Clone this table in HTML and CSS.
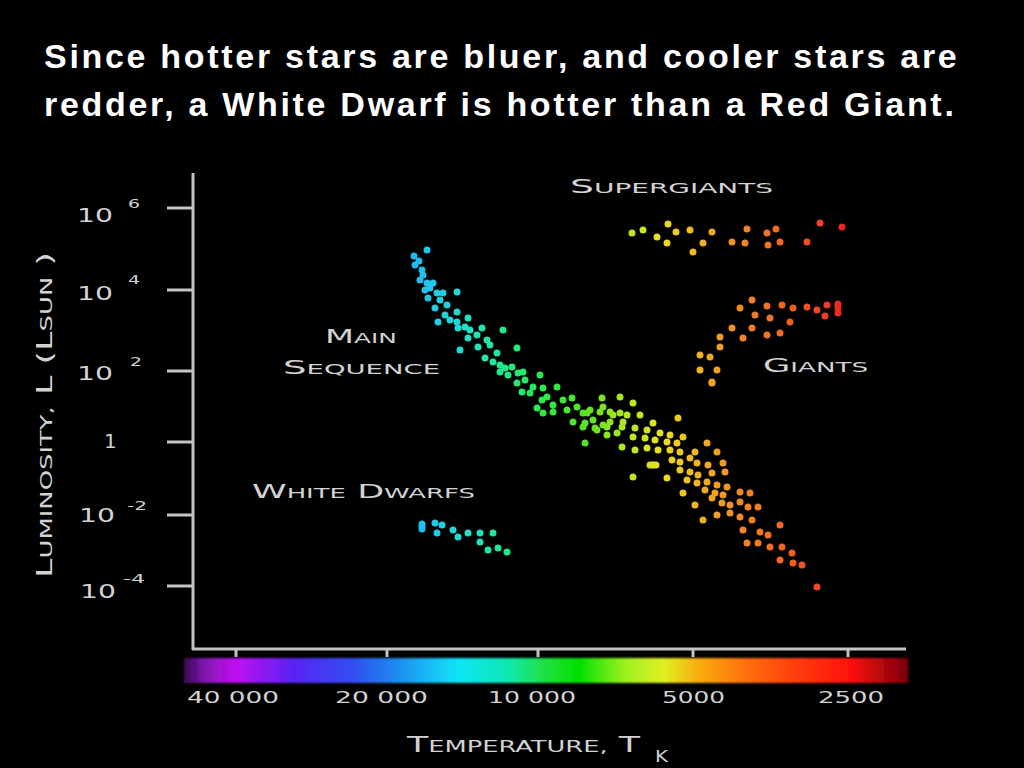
FILE: index.html
```html
<!DOCTYPE html>
<html lang="en">
<head>
<meta charset="utf-8">
<title>Hertzsprung-Russell diagram</title>
<link rel="stylesheet" href="styles.css">
</head>
<body>
<main class="slide">
  <h1 class="title">Since hotter stars are bluer, and cooler stars are<br>redder, a White Dwarf is hotter than a Red Giant.</h1>
  <svg class="chart" width="1024" height="639" viewBox="0 129 1024 639" xmlns="http://www.w3.org/2000/svg">
    <defs>
      <linearGradient id="temp" gradientUnits="userSpaceOnUse" x1="184" y1="0" x2="908" y2="0">
        <stop offset="0" stop-color="#3a0a52"/>
        <stop offset="0.025" stop-color="#7a14a8"/>
        <stop offset="0.07" stop-color="#c010f0"/>
        <stop offset="0.15" stop-color="#5a22f4"/>
        <stop offset="0.236" stop-color="#3050f0"/>
        <stop offset="0.283" stop-color="#2080f0"/>
        <stop offset="0.38" stop-color="#10e6f8"/>
        <stop offset="0.447" stop-color="#10e8b0"/>
        <stop offset="0.5" stop-color="#20e040"/>
        <stop offset="0.545" stop-color="#00e000"/>
        <stop offset="0.61" stop-color="#a0f020"/>
        <stop offset="0.663" stop-color="#e0f020"/>
        <stop offset="0.708" stop-color="#f8b010"/>
        <stop offset="0.775" stop-color="#ff7010"/>
        <stop offset="0.841" stop-color="#ff4010"/>
        <stop offset="0.92" stop-color="#ff1010"/>
        <stop offset="1" stop-color="#780010"/>
      </linearGradient>
      <linearGradient id="starcol" gradientUnits="userSpaceOnUse" x1="400" y1="0" x2="850" y2="0">
        <stop offset="0" stop-color="#20a8f0"/>
        <stop offset="0.067" stop-color="#20c8e8"/>
        <stop offset="0.156" stop-color="#20e0c8"/>
        <stop offset="0.244" stop-color="#20e880"/>
        <stop offset="0.333" stop-color="#30e840"/>
        <stop offset="0.422" stop-color="#60e020"/>
        <stop offset="0.5" stop-color="#b0e820"/>
        <stop offset="0.578" stop-color="#e8e020"/>
        <stop offset="0.667" stop-color="#f0b020"/>
        <stop offset="0.756" stop-color="#f08828"/>
        <stop offset="0.867" stop-color="#f06020"/>
        <stop offset="0.956" stop-color="#f03828"/>
        <stop offset="1" stop-color="#e81818"/>
      </linearGradient>
      <filter id="soft" x="-5%" y="-50%" width="110%" height="200%">
        <feGaussianBlur stdDeviation="1.3"/>
      </filter>
      <filter id="glow" x="-10%" y="-10%" width="120%" height="120%">
        <feGaussianBlur stdDeviation="0.6"/>
      </filter>
    </defs>

    <!-- axes -->
    <path class="axis" d="M193 173V650M192 649H906"/>
    <path class="axis" d="M167 208H193M167 290H193M167 371H193M167 442H193M167 515H193M167 586H193"/>
    <path class="axis" d="M236 649V657M387 649V657M538 649V657M693 649V657M848 649V657"/>

    <!-- y tick labels -->
    <text class="lbl tick" x="77" y="222" textLength="36" lengthAdjust="spacingAndGlyphs">10</text>
    <text class="lbl sup" x="128" y="208" textLength="12" lengthAdjust="spacingAndGlyphs">6</text>
    <text class="lbl tick" x="77" y="300" textLength="36" lengthAdjust="spacingAndGlyphs">10</text>
    <text class="lbl sup" x="128" y="284" textLength="12" lengthAdjust="spacingAndGlyphs">4</text>
    <text class="lbl tick" x="77" y="380" textLength="36" lengthAdjust="spacingAndGlyphs">10</text>
    <text class="lbl sup" x="130" y="366" textLength="12" lengthAdjust="spacingAndGlyphs">2</text>
    <text class="lbl tick" x="104" y="448">1</text>
    <text class="lbl tick" x="79" y="522" textLength="36" lengthAdjust="spacingAndGlyphs">10</text>
    <text class="lbl sup" x="127" y="510" textLength="20" lengthAdjust="spacingAndGlyphs">-2</text>
    <text class="lbl tick" x="80" y="598" textLength="36" lengthAdjust="spacingAndGlyphs">10</text>
    <text class="lbl sup" x="123" y="583" textLength="22" lengthAdjust="spacingAndGlyphs">-4</text>

    <!-- y axis title -->
    <text class="lbl ytitle" transform="translate(52 578) rotate(-90)" textLength="326" lengthAdjust="spacingAndGlyphs">L<tspan class="sc">UMINOSITY,</tspan> L (L<tspan class="sc">SUN</tspan> )</text>

    <!-- region labels -->
    <text class="lbl region" x="570" y="193" textLength="203" lengthAdjust="spacingAndGlyphs">S<tspan class="sc">UPERGIANTS</tspan></text>
    <text class="lbl region" x="325" y="343" textLength="72" lengthAdjust="spacingAndGlyphs">M<tspan class="sc">AIN</tspan></text>
    <text class="lbl region" x="283" y="374" textLength="157" lengthAdjust="spacingAndGlyphs">S<tspan class="sc">EQUENCE</tspan></text>
    <text class="lbl region" x="763" y="372" textLength="105" lengthAdjust="spacingAndGlyphs">G<tspan class="sc">IANTS</tspan></text>
    <text class="lbl region" x="252" y="498" textLength="223" lengthAdjust="spacingAndGlyphs">W<tspan class="sc">HITE</tspan> D<tspan class="sc">WARFS</tspan></text>

    <!-- stars -->
    <g class="stars" filter="url(#glow)">
      <path class="dots" d="M427 250h0M414 256h0M415 265h0M419 261h0M422 270h0M423 275h0M420 280h0M427 283h0M433 283h0M430 288h0M425 290h0M437 293h0M443 293h0M457 292h0M428 298h0M440 300h0M447 305h0M435 308h0M457 312h0M445 315h0M438 322h0M450 320h0M457 322h0M468 318h0M458 328h0M465 327h0M470 330h0M482 328h0M468 338h0M477 335h0M487 340h0M503 330h0M478 347h0M490 345h0M460 350h0M497 353h0M517 348h0M485 358h0M493 362h0M500 365h0M505 368h0M512 367h0M500 372h0M508 375h0M518 373h0M523 372h0M540 375h0M517 383h0M525 380h0M533 387h0M522 392h0M530 393h0M543 388h0M557 387h0M547 397h0M542 400h0M553 405h0M563 400h0M572 398h0M537 408h0M543 413h0M553 412h0M567 410h0M577 407h0M583 413h0M590 410h0M602 398h0M603 407h0M620 397h0M620 413h0M610 412h0M593 420h0M573 422h0M583 427h0M603 425h0M610 422h0M623 422h0M597 430h0M617 433h0"/>
      <path class="dots" d="M712 383h0M633 403h0M587 413h0M600 412h0M613 415h0M627 415h0M640 415h0M653 423h0M678 418h0M585 423h0M595 428h0M607 427h0M622 427h0M635 428h0M647 430h0M660 433h0M670 435h0M683 437h0M607 435h0M633 437h0M645 438h0M655 440h0M667 442h0M677 443h0M707 443h0M585 443h0M622 447h0M635 450h0M647 448h0M658 450h0M670 450h0M680 452h0M695 452h0M717 452h0M650 465h6M672 460h0M680 462h0M690 458h0M697 463h0M708 465h0M723 463h0M680 470h0M690 472h0M698 475h0M712 473h0M725 472h0M633 477h0M667 478h0M687 480h0M697 483h0M707 482h0M717 485h0M727 487h0M705 490h0M715 493h0M723 495h0M740 492h0M750 493h0M683 493h0M712 498h0M722 503h0M730 505h0M740 502h0M748 507h0M758 507h0M695 505h0M703 520h0M717 515h0M730 513h0M740 517h0M752 520h0M743 530h0M760 532h0M768 535h0M780 525h0M747 543h0M758 543h0M770 547h0M782 547h0M792 553h0M780 560h0M793 563h0M802 565h0M817 587h0"/>
      <path class="dots" d="M632 233h0M643 230h0M657 237h0M667 243h0M668 224h0M676 232h0M690 230h0M693 252h0M703 243h0M712 232h0M732 242h0M745 243h0M747 229h0M767 233h0M776 229h0M768 245h0M780 242h0M807 242h0M820 223h0M842 227h0"/>
      <path class="dots" d="M752 300h0M740 308h0M767 306h0M782 305h0M793 308h0M807 307h0M817 310h0M827 305h0M838 304v4M838 313h0M825 316h0M755 315h0M770 318h0M790 322h0M732 328h0M752 328h0M743 338h0M767 335h0M780 333h0M720 337h0M720 347h0M700 355h0M710 357h0M700 370h0M717 370h0M712 382h0"/>
      <path class="dots" d="M422 524v5M435 523h0M442 525h0M437 533h0M453 530h0M458 537h0M468 533h0M480 533h0M493 533h0M480 542h0M488 550h0M498 548h0M507 552h0"/>
    </g>

    <!-- temperature bar -->
    <rect class="tbar" x="184" y="658" width="724" height="25" filter="url(#soft)"/>

    <!-- x tick labels -->
    <text class="lbl xtick" x="187" y="703" textLength="92" lengthAdjust="spacingAndGlyphs">40 000</text>
    <text class="lbl xtick" x="335" y="703" textLength="93" lengthAdjust="spacingAndGlyphs">20 000</text>
    <text class="lbl xtick" x="488" y="703" textLength="88" lengthAdjust="spacingAndGlyphs">10 000</text>
    <text class="lbl xtick" x="662" y="703" textLength="63" lengthAdjust="spacingAndGlyphs">5000</text>
    <text class="lbl xtick" x="818" y="703" textLength="66" lengthAdjust="spacingAndGlyphs">2500</text>

    <!-- x axis title -->
    <text class="lbl xtitle" x="407" y="752" textLength="233" lengthAdjust="spacingAndGlyphs">T<tspan class="sc">EMPERATURE,</tspan> T</text>
    <text class="lbl sub" x="655" y="762" textLength="13" lengthAdjust="spacingAndGlyphs">K</text>
  </svg>
</main>
</body>
</html>
```

FILE: styles.css
```css
html, body {
  margin: 0;
  padding: 0;
  background: #000;
}

.slide {
  width: 1024px;
  height: 768px;
  background: #000;
  overflow: hidden;
}

.title {
  margin: 0;
  padding: 32px 0 0 44px;
  height: 97px;
  font-family: "Liberation Sans", Arial, sans-serif;
  font-weight: bold;
  font-size: 34px;
  letter-spacing: 2.7px;
  line-height: 48px;
  white-space: nowrap;
  color: #fff;
}

.chart {
  display: block;
}

.axis {
  fill: none;
  stroke: #c4c4c4;
  stroke-width: 3;
}

.lbl {
  fill: #d2d2d2;
  font-family: "DejaVu Sans", "Liberation Sans", sans-serif;
  font-weight: normal;
}

.lbl .sc {
  font-size: 0.74em;
}

.tick {
  font-size: 20px;
}

.sup {
  font-size: 13px;
}

.ytitle {
  font-size: 22px;
}

.region {
  font-size: 20px;
}

.xtick {
  font-size: 15px;
}

.xtitle {
  font-size: 21px;
}

.sub {
  font-size: 15px;
}

.dots {
  fill: none;
  stroke: url(#starcol);
  stroke-width: 7;
  stroke-linecap: round;
  stroke-linejoin: round;
}

.tbar {
  fill: url(#temp);
}
```
